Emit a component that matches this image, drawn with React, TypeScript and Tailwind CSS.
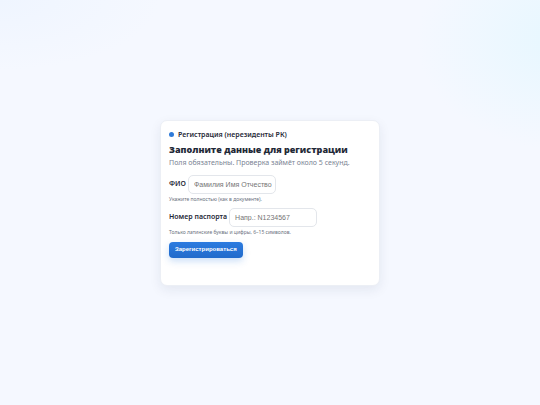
const fields = [
  { id: "fio", label: "ФИО", placeholder: "Фамилия Имя Отчество", hint: "Укажите полностью (как в документе)." },
  { id: "passport", label: "Номер паспорта", placeholder: "Напр.: N1234567", hint: "Только латинские буквы и цифры, 6–15 символов." },
];

export default function App() {
  return (
    <main className="flex min-h-screen items-center justify-center bg-[#f5f8ff] bg-[radial-gradient(ellipse_150px_110px_at_105%_10%,#e6f7ff,transparent),radial-gradient(ellipse_160px_70px_at_0%_0%,#eff5ff,transparent)] p-4 font-['Noto_Sans',sans-serif] text-[#1f2937]">
      <section className="w-full max-w-[220px] rounded-[7px] border border-[#eceff5] bg-white px-2 pt-2 pb-[27px] shadow-[0_4px_12px_rgba(31,41,80,0.08)]">
        <div className="flex items-center gap-1 text-[7px] leading-[12px] font-semibold">
          <span className="size-[5px] rounded-full bg-[#2f7bd9]" />
          <span>Регистрация (нерезиденты РК)</span>
        </div>
        <h1 className="mt-[2px] font-['Open_Sans','Noto_Sans',sans-serif] text-[9px] leading-[14px] font-extrabold">Заполните данные для регистрации</h1>
        <p className="text-[7px] leading-[12px] text-[#7b8494]">Поля обязательны. Проверка займёт около 5 секунд.</p>
        <form className="mt-[6px]">
          {fields.map((field) => (
            <div key={field.id} className="mb-1">
              <div className="flex items-center gap-[2px]">
                <label htmlFor={field.id} className="text-[7px] leading-[12px] font-semibold">{field.label}</label>
                <input
                  id={field.id}
                  type="text"
                  placeholder={field.placeholder}
                  aria-describedby={`${field.id}-hint`}
                  className="h-[19px] w-[88px] rounded-[5px] border border-[#e3e6eb] bg-white pl-[5px] font-['Liberation_Sans',sans-serif] text-[7px] placeholder:text-[#757575] focus:border-[#2f7bd9] focus:outline-none"
                />
              </div>
              <p id={`${field.id}-hint`} className="text-[5px] leading-[10px] text-[#6b7280]">{field.hint}</p>
            </div>
          ))}
          <button
            type="submit"
            className="mt-[5px] block h-[16px] rounded-[4px] bg-linear-to-b from-[#2b7be0] to-[#226bcb] px-[6px] font-['Liberation_Sans',sans-serif] text-[6px] font-bold text-white shadow-[0_3px_7px_rgba(43,123,224,0.25)]"
          >
            Зарегистрироваться
          </button>
        </form>
      </section>
    </main>
  );
}
